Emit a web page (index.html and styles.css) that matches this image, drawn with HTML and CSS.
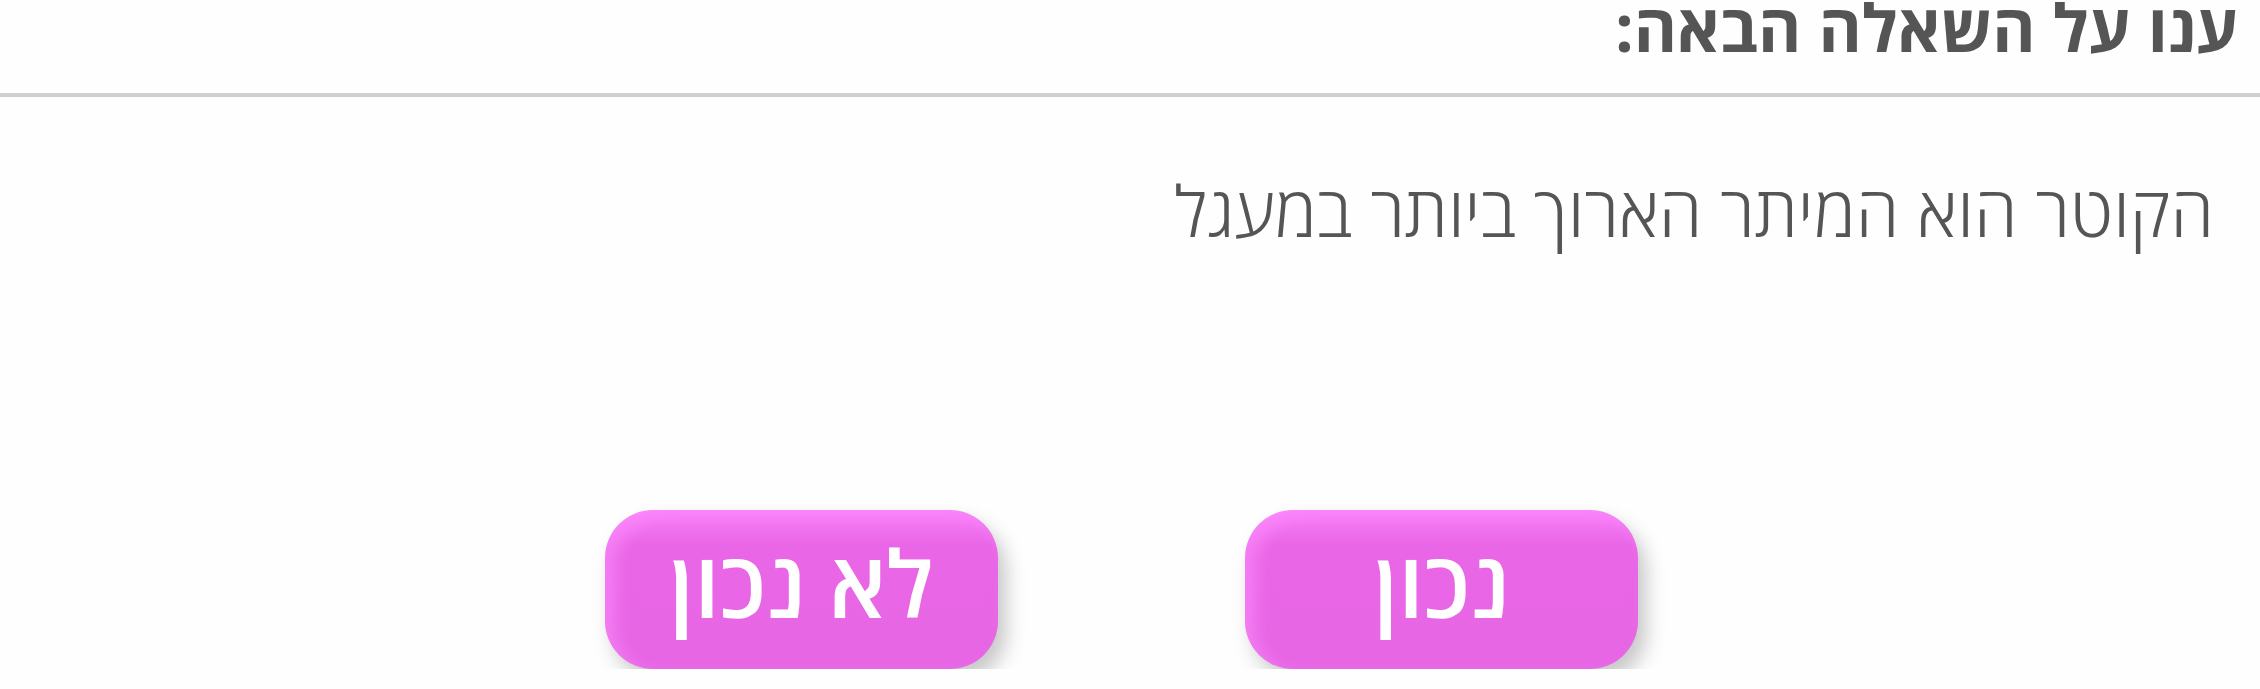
FILE: index.html
```html
<!DOCTYPE html>
<html lang="he" dir="rtl">
<head>
    <meta charset="UTF-8">
    <meta name="viewport" content="width=device-width, initial-scale=1.0">
    <title>שאלה</title>
    <link rel="stylesheet" href="styles.css">
</head>
<body>
    <header class="top-bar">
        <h1 class="title">ענו על השאלה הבאה:</h1>
    </header>

    <main class="quiz">
        <p class="question">הקוטר הוא המיתר הארוך ביותר במעגל</p>

        <div class="answers">
            <button type="button" class="answer">נכון</button>
            <button type="button" class="answer">לא נכון</button>
        </div>
    </main>
</body>
</html>
```

FILE: styles.css
```css
body {
    margin: 0;
    background-color: #fefefe;
    font-family: 'Open Sans', 'DejaVu Sans', sans-serif;
    color: #555;
    overflow: hidden;
}
.top-bar {
    display: flex;
    align-items: flex-start;
    height: 93px;
    border-bottom: 4px solid #d0d0d0;
    padding-right: 22px;
}
.title {
    margin: 0;
    font-size: 66px;
    font-weight: 700;
    line-height: 53px;
}
.quiz {
    padding: 0 46px;
}
.question {
    margin: 0;
    padding-top: 73px;
    font-size: 70px;
    font-weight: 300;
    line-height: 80px;
}
.answers {
    display: flex;
    justify-content: center;
    gap: 247px;
    margin-top: 260px;
    padding-right: 17px;
}
.answer {
    width: 393px;
    height: 159px;
    padding: 0 0 14px;
    border: none;
    border-radius: 48px;
    background-color: #e766e4;
    background-image: linear-gradient(180deg, #f77ef6 0%, #e967e6 22%, #e766e4 100%);
    box-shadow: inset 10px 8px 16px rgba(255, 140, 255, 0.6), 8px 12px 20px rgba(0, 0, 0, 0.22);
    color: #fff;
    font-family: 'Open Sans', 'DejaVu Sans', sans-serif;
    font-size: 92px;
    font-weight: 600;
    line-height: 1;
    cursor: pointer;
}
```
